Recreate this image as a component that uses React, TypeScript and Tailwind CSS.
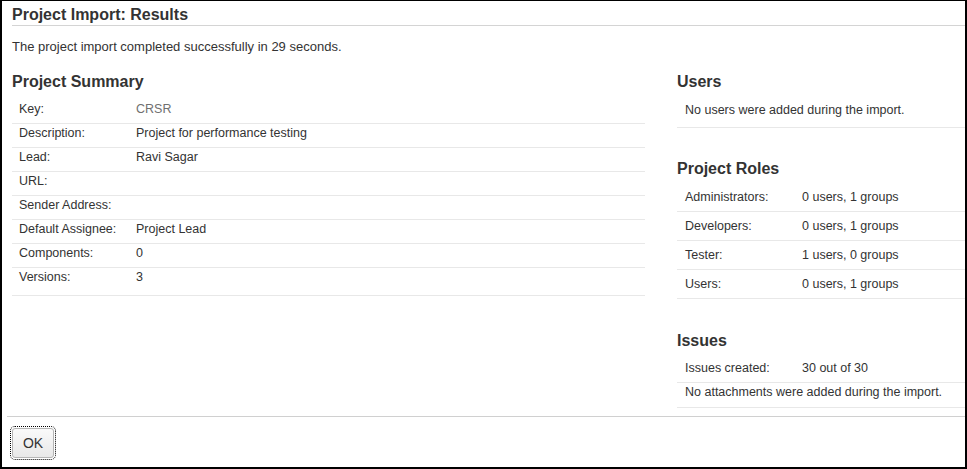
import React from "react";

const summary: [string, string, boolean?][] = [
  ["Key:", "CRSR", true],
  ["Description:", "Project for performance testing"],
  ["Lead:", "Ravi Sagar"],
  ["URL:", ""],
  ["Sender Address:", ""],
  ["Default Assignee:", "Project Lead"],
  ["Components:", "0"],
  ["Versions:", "3"],
];

const roles: [string, string][] = [
  ["Administrators:", "0 users, 1 groups"],
  ["Developers:", "0 users, 1 groups"],
  ["Tester:", "1 users, 0 groups"],
  ["Users:", "0 users, 1 groups"],
];

export default function App() {
  return (
    <div
      className="w-[967px] h-[469px] bg-white border-t border-x-2 border-b-2 border-black flex flex-col text-[#333] text-[12.5px] overflow-hidden"
      style={{ fontFamily: '"Liberation Sans", Arial, sans-serif' }}
    >
      <div className="flex-1 pl-[10px]">
        <div className="pt-[4px] border-b border-[#d4d4d4]">
          <h1 className="text-[16px] leading-[20px] font-bold">Project Import: Results</h1>
        </div>
        <p className="mt-[13px] leading-4 text-[13px]">The project import completed successfully in 29 seconds.</p>
        <div className="flex mt-[17px]">
          <div className="w-[633px]">
            <h2 className="text-[16px] leading-[20px] font-bold">Project Summary</h2>
            <div className="mt-[8px]">
              {summary.map(([k, v, gray], i) => (
                <div
                  key={k}
                  className={`flex pl-[7px] pt-[1px] leading-4 border-b border-[#e8e8e8] ${
                    i === summary.length - 1 ? "pb-[10px]" : "pb-[6px]"
                  }`}
                >
                  <span className="w-[117px] shrink-0">{k}</span>
                  <span className={gray ? "text-[#707070]" : ""}>{v}</span>
                </div>
              ))}
            </div>
          </div>
          <div className="ml-[32px] flex-1">
            <h2 className="text-[16px] leading-[20px] font-bold">Users</h2>
            <div className="mt-[9px] pl-[8px] pt-[1px] pb-[9px] leading-4 border-b border-[#e8e8e8]">
              No users were added during the import.
            </div>
            <h2 className="mt-[31px] text-[16px] leading-[20px] font-bold">Project Roles</h2>
            <div className="mt-[4px]">
              {roles.map(([k, v]) => (
                <div key={k} className="flex pl-[8px] py-[6px] leading-4 border-b border-[#e8e8e8]">
                  <span className="w-[117px] shrink-0">{k}</span>
                  <span>{v}</span>
                </div>
              ))}
            </div>
            <h2 className="mt-[32px] text-[16px] leading-[20px] font-bold">Issues</h2>
            <div className="mt-[3px]">
              <div className="flex pl-[8px] py-[6px] leading-4 border-b border-[#e8e8e8]">
                <span className="w-[117px] shrink-0">Issues created:</span>
                <span>30 out of 30</span>
              </div>
              <div className="pl-[8px] pt-[1px] pb-[7px] leading-4 border-b border-[#e8e8e8]">
                No attachments were added during the import.
              </div>
            </div>
          </div>
        </div>
      </div>
      <div className="h-[51px] shrink-0 ml-[5px] border-t border-[#d0d0d0] pl-[5px] pt-[11px]">
        <button
          className="w-[42px] h-[30px] rounded-[3px] border border-[#b5b5b5] bg-gradient-to-b from-[#fafafa] to-[#e8e8e8] text-[14px] text-[#333] leading-none outline-1 outline-dotted outline-black outline-offset-1"
          style={{ fontFamily: '"Liberation Sans", Arial, sans-serif' }}
        >
          OK
        </button>
      </div>
    </div>
  );
}
